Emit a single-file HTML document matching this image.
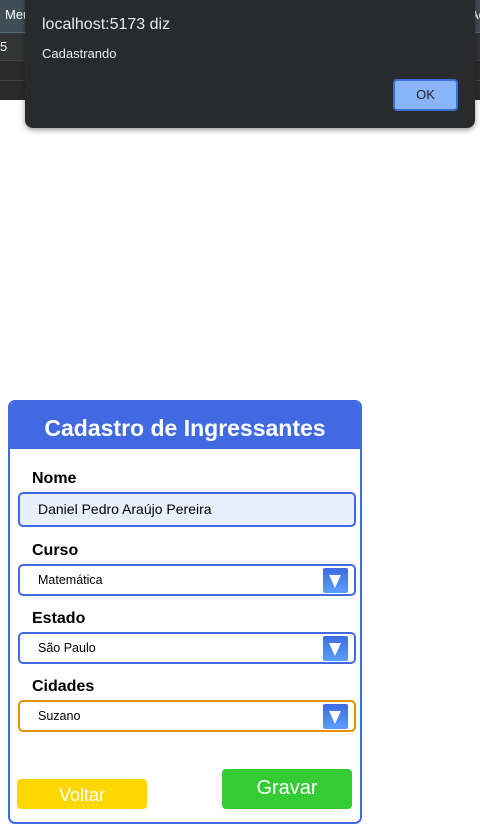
<!DOCTYPE html>
<html><head><meta charset="utf-8"><style>
*{box-sizing:border-box;margin:0;padding:0}
body{width:480px;height:832px;background:#fff;position:relative;overflow:hidden;font-family:"Liberation Sans",Arial,sans-serif}
.bg{position:absolute;left:0;width:480px}
.dlg{position:absolute;left:25px;top:-8px;width:450px;height:136px;background:#292a2d;border-radius:8px;box-shadow:0 2px 6px rgba(0,0,0,.4);color:#e8eaed}
.card{position:absolute;left:8px;top:400px;width:354px;height:424px;border:2px solid #4169e1;border-radius:7px;overflow:hidden}
.hd{background:#4169e1;height:47px;color:#fff;font-weight:bold;font-size:23px;text-align:center;line-height:52px}
.lb{position:absolute;left:22px;font-weight:bold;font-size:16px;color:#000}
.in{position:absolute;left:8px;width:338px;border:2px solid #4169e1;border-radius:5px;font-size:12.5px;color:#000;padding-left:18px}
.arr{position:absolute;right:6px;top:2px;width:25px;height:25px;border-radius:2px;background:linear-gradient(#3e6ae0,#5aa0ff)}
.arr:after{content:"";position:absolute;left:6px;top:7px;border-left:6.5px solid transparent;border-right:6.5px solid transparent;border-top:13px solid #fff}
.btn{position:absolute;color:#fff;text-align:center;border-radius:4px}
</style></head><body>
<div class="bg" style="top:0;height:32px;background:#3f4d55"></div>
<div class="bg" style="top:32px;height:28px;background:#333435;border-top:1px solid #5a6a72"></div>
<div class="bg" style="top:60px;height:20px;background:#2b2b2b;border-top:1px solid #444"></div>
<div class="bg" style="top:80px;height:20px;background:#2b2b2b;border-top:1px solid #444"></div>
<div style="position:absolute;left:5px;top:7px;color:#fff;font-size:13px">Meu</div>
<div style="position:absolute;left:0;top:39px;color:#fff;font-size:13px">5</div>
<div style="position:absolute;left:470px;top:7px;color:#fff;font-size:13px">Ac</div>
<div class="dlg">
<div style="position:absolute;left:17px;top:24px;font-size:16px">localhost:5173 diz</div>
<div style="position:absolute;left:17px;top:54px;font-size:13px">Cadastrando</div>
<div style="position:absolute;left:368px;top:87px;width:65px;height:32px;background:#8ab4f8;border:2px solid #3b6fd4;border-radius:4px;color:#202124;font-size:13px;text-align:center;line-height:28px">OK</div>
</div>
<div class="card">
<div class="hd">Cadastro de Ingressantes</div>
<div class="lb" style="top:68px">Nome</div>
<div class="in" style="top:90px;height:35px;background:#e8f0fe;line-height:31px;font-size:14px">Daniel Pedro Araújo Pereira</div>
<div class="lb" style="top:140px">Curso</div>
<div class="in" style="top:162px;height:32px;line-height:28px">Matemática<div class="arr"></div></div>
<div class="lb" style="top:208px">Estado</div>
<div class="in" style="top:230px;height:32px;line-height:28px">São Paulo<div class="arr"></div></div>
<div class="lb" style="top:276px">Cidades</div>
<div class="in" style="top:298px;height:32px;line-height:28px;border-color:#e39400">Suzano<div class="arr"></div></div>
<div class="btn" style="left:7px;top:377px;width:130px;height:30px;background:#ffd700;font-size:18px;line-height:32px">Voltar</div>
<div class="btn" style="left:212px;top:367px;width:130px;height:40px;background:#33cc33;font-size:20px;line-height:38px">Gravar</div>
</div>
</body></html>
